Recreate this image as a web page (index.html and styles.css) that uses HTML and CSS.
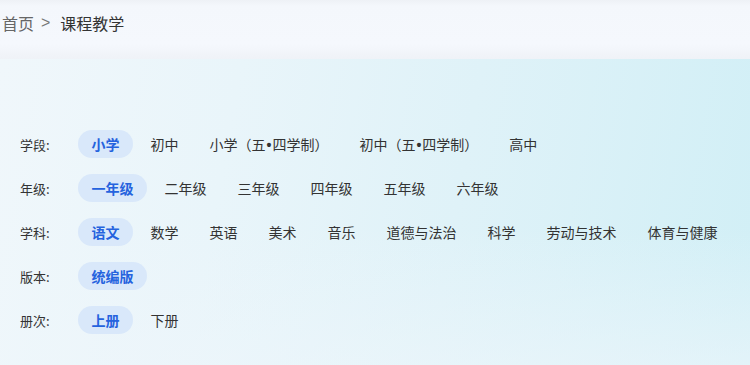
FILE: index.html
```html
<!DOCTYPE html>
<html lang="zh">
<head>
<meta charset="utf-8">
<link rel="stylesheet" href="styles.css">
</head>
<body>
<header class="crumbs">
  <span class="crumb">首页</span>
  <span class="sep">&gt;</span>
  <span class="crumb current">课程教学</span>
</header>
<main class="panel">
  <div class="row">
    <span class="label">学段:</span>
    <span class="opt active">小学</span>
    <span class="opt">初中</span>
    <span class="opt">小学（五<span class="dot">•</span>四学制）</span>
    <span class="opt">初中（五<span class="dot">•</span>四学制）</span>
    <span class="opt">高中</span>
  </div>
  <div class="row">
    <span class="label">年级:</span>
    <span class="opt active">一年级</span>
    <span class="opt">二年级</span>
    <span class="opt">三年级</span>
    <span class="opt">四年级</span>
    <span class="opt">五年级</span>
    <span class="opt">六年级</span>
  </div>
  <div class="row">
    <span class="label">学科:</span>
    <span class="opt active">语文</span>
    <span class="opt">数学</span>
    <span class="opt">英语</span>
    <span class="opt">美术</span>
    <span class="opt">音乐</span>
    <span class="opt">道德与法治</span>
    <span class="opt">科学</span>
    <span class="opt">劳动与技术</span>
    <span class="opt">体育与健康</span>
  </div>
  <div class="row">
    <span class="label">版本:</span>
    <span class="opt active">统编版</span>
  </div>
  <div class="row">
    <span class="label">册次:</span>
    <span class="opt active">上册</span>
    <span class="opt">下册</span>
  </div>
</main>
</body>
</html>
```
FILE: styles.css
```css
* { box-sizing: border-box; }
html, body { margin: 0; padding: 0; }
body {
  width: 750px;
  height: 365px;
  overflow: hidden;
  font-family: "Noto Sans CJK SC", "Noto Sans", sans-serif;
  background: #f2f6fb;
}
.crumbs {
  height: 59px;
  display: flex;
  align-items: center;
  gap: 6px;
  padding: 0 0 13px 2px;
  font-size: 16px;
  color: #666;
  background: linear-gradient(180deg, #eef1f6 0px, #f4f7fc 6px, #f5f8fd 44px, #eff2f7 59px);
}
.crumbs .sep {
  font-size: 16px;
  color: #777;
  font-family: "Liberation Sans", sans-serif;
  padding: 0 4px 0 1px;
}
.crumbs .current { color: #333; }
.panel {
  height: 306px;
  padding: 71px 0 0 20px;
  display: flex;
  flex-direction: column;
  gap: 16px;
  background:
    linear-gradient(180deg, rgba(240,248,252,0) 0%, rgba(240,247,252,0) 55%, rgba(238,246,251,0.6) 100%),
    linear-gradient(100deg, #f0f7fb 0%, #e9f5fa 30%, #dff2f8 60%, #d1eff6 100%);
}
.row {
  display: flex;
  align-items: center;
  height: 28px;
  gap: 4px;
  font-size: 14px;
  color: #333;
}
.label {
  width: 54px;
  font-size: 13px;
  color: #333;
}
.opt {
  height: 28px;
  line-height: 28px;
  padding: 0 13.5px;
  border-radius: 14px;
  white-space: nowrap;
}
.opt .dot {
  font-family: "Liberation Sans", sans-serif;
  font-weight: 700;
  padding: 0 1px;
}
.opt.active {
  background: #d9e8fa;
  color: #2563de;
  font-weight: 700;
}
```
